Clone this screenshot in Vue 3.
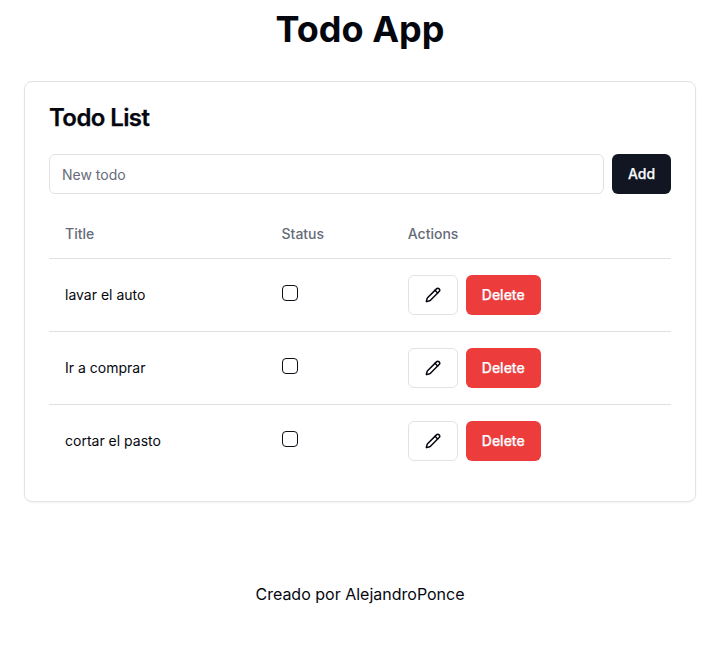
<script setup>
import { ref } from 'vue'

const draft = ref('')
const todos = ref([
  { id: 1, title: 'lavar el auto', done: false },
  { id: 2, title: 'Ir a comprar', done: false },
  { id: 3, title: 'cortar el pasto', done: false },
])

function add() {
  const title = draft.value.trim()
  if (!title) return
  todos.value.push({ id: Date.now(), title, done: false })
  draft.value = ''
}

function remove(id) {
  todos.value = todos.value.filter((t) => t.id !== id)
}
</script>

<template>
  <div class="page">
    <h1 class="heading">Todo App</h1>
    <main class="card">
      <h2 class="card-title">Todo List</h2>
      <form class="new-todo" @submit.prevent="add">
        <input v-model="draft" class="field" type="text" placeholder="New todo" />
        <button class="btn primary" type="submit">Add</button>
      </form>
      <div class="table">
        <div class="row head">
          <span>Title</span>
          <span>Status</span>
          <span>Actions</span>
        </div>
        <div v-for="todo in todos" :key="todo.id" class="row">
          <span>{{ todo.title }}</span>
          <span class="status">
            <input v-model="todo.done" class="check" type="checkbox" />
          </span>
          <span class="actions">
            <button class="btn outline" type="button">
              <svg width="16" height="16" viewBox="0 0 24 24" fill="none" stroke="currentColor" stroke-width="2.2" stroke-linecap="round" stroke-linejoin="round">
                <path d="M21.174 6.812a1 1 0 0 0-3.986-3.987L3.842 16.174a2 2 0 0 0-.5.83l-1.321 4.352a.5.5 0 0 0 .623.622l4.353-1.32a2 2 0 0 0 .83-.497z" />
                <path d="m15 5 4 4" />
              </svg>
            </button>
            <button class="btn danger" type="button" @click="remove(todo.id)">Delete</button>
          </span>
        </div>
      </div>
    </main>
    <footer class="footer">Creado por AlejandroPonce</footer>
  </div>
</template>

<style>
body {
  background: #fff;
}
</style>

<style scoped>
.page,
.page * {
  box-sizing: border-box;
}
.page {
  padding: 9px 32px 0 24px;
  font-family: Inter, "Liberation Sans", sans-serif;
  font-size: 14px;
  line-height: 20px;
  color: #05070f;
}
.heading {
  margin: 0;
  text-align: center;
  font-size: 36px;
  line-height: 40px;
  font-weight: 700;
}
.card {
  margin-top: 32px;
  height: 421px;
  padding: 24px;
  border: 1px solid #e2e3e8;
  border-radius: 8px;
  box-shadow: 0 1px 2px rgba(0, 0, 0, 0.05);
}
.card-title {
  margin: 0;
  font-size: 24px;
  line-height: 24px;
  font-weight: 600;
  letter-spacing: -0.6px;
  -webkit-text-stroke: 0.25px currentColor;
}
.new-todo {
  display: flex;
  gap: 8px;
  margin-top: 24px;
}
.field {
  flex: 1;
  min-width: 0;
  height: 40px;
  padding: 0 12px;
  border: 1px solid #e2e2e5;
  border-radius: 6px;
  background: #fff;
  font: inherit;
  color: inherit;
}
.field::placeholder {
  color: #666b78;
  opacity: 1;
}
.btn {
  display: flex;
  align-items: center;
  justify-content: center;
  height: 40px;
  padding: 0;
  border: 0;
  border-radius: 6px;
  font: inherit;
  font-weight: 500;
  -webkit-text-stroke: 0.25px currentColor;
}
.primary {
  width: 59px;
  background: #121622;
  color: #f8fafc;
}
.outline {
  width: 50px;
  border: 1px solid #e2e2e5;
  background: #fff;
  color: #05070f;
}
.danger {
  width: 75px;
  background: #ec3c3c;
  color: #f8fafc;
}
.table {
  margin-top: 16px;
}
.row {
  display: grid;
  grid-template-columns: 216.5px 126.25px 1fr;
  align-items: center;
  height: 73px;
  padding: 0 16px;
  border-bottom: 1px solid #dfe0e2;
}
.row:last-child {
  border-bottom: 0;
  height: 72px;
}
.head {
  height: 49px;
  font-weight: 500;
  color: #666b78;
}
.status {
  display: flex;
  padding-bottom: 4px;
}
.check {
  appearance: none;
  width: 16px;
  height: 16px;
  margin: 0;
  border: 1px solid #0c0e18;
  border-radius: 4px;
}
.check:checked {
  background: #0f172a;
}
.actions {
  display: flex;
  gap: 8px;
}
.footer {
  margin-top: 80px;
  text-align: center;
  font-size: 16px;
  line-height: 24px;
}
</style>
